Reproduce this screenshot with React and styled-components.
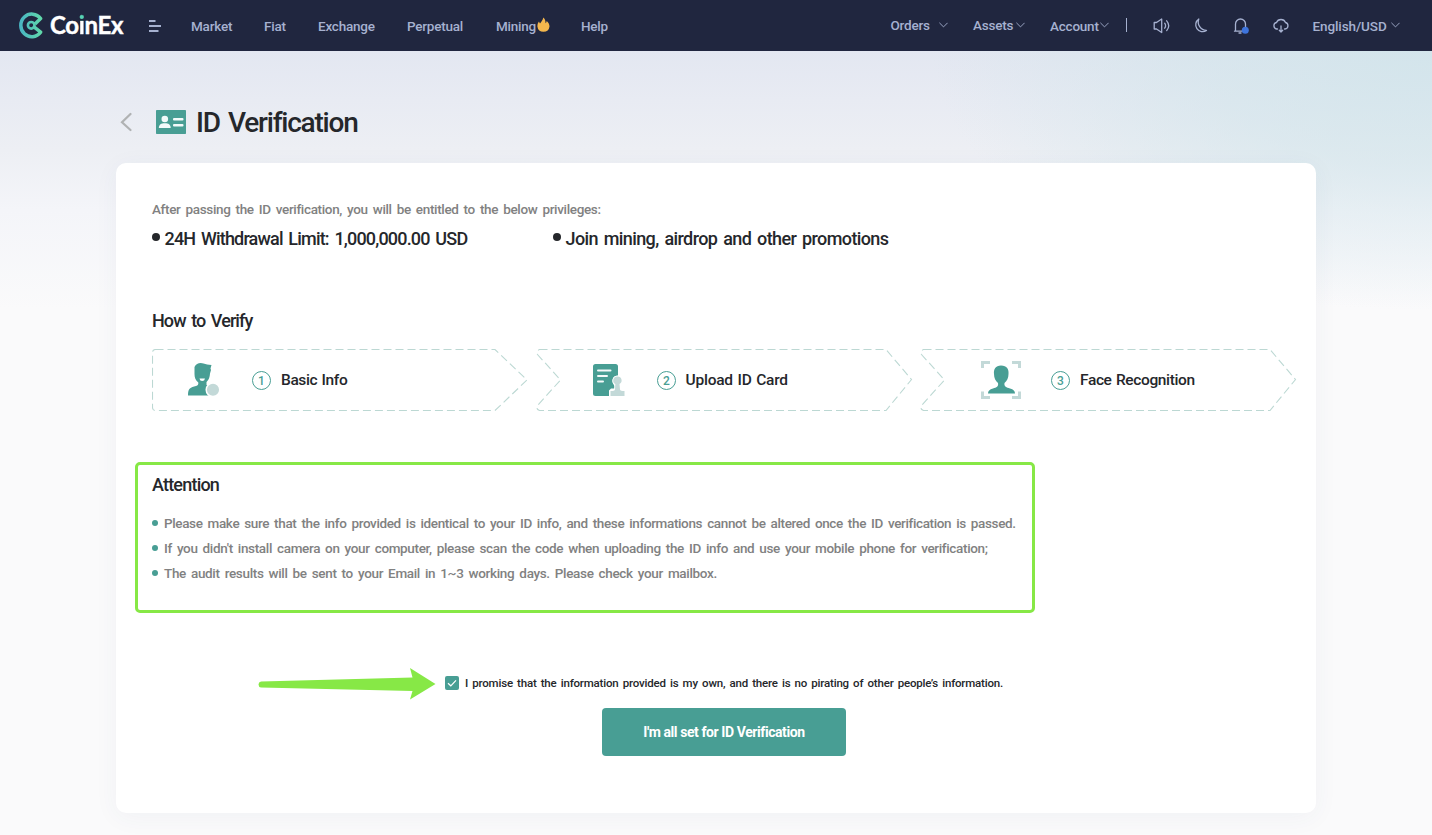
import React from 'react';
import styled, { createGlobalStyle } from 'styled-components';

const GlobalStyle = createGlobalStyle`
  * { box-sizing: border-box; }
  body {
    margin: 0;
    font-family: Roboto, "Liberation Sans", sans-serif;
    font-weight: 500;
    color: #25272b;
    background: #fafafb;
  }
`;

const Page = styled.div`
  height: 835px;
  overflow: hidden;
  background:
    radial-gradient(ellipse 500px 260px at 1432px 51px, rgba(207, 228, 234, 0.8), rgba(207, 228, 234, 0.55) 45%, rgba(207, 228, 234, 0)),
    linear-gradient(180deg, #e3e7f1 51px, #e8ebf3 100px, #edeff4 150px, #f4f5f9 210px, #fafafb 310px);
`;

const Header = styled.header`
  height: 51px;
  display: flex;
  align-items: center;
  background: #20263f;
  color: #a6b1d0;
  font-size: 13.5px;
  padding: 1px 0 0 18px;
`;

const Logo = styled.div`
  width: 131px;
  display: flex;
  align-items: center;
  gap: 6px;
  color: #fff;
  font: 700 24px/30px Lato, sans-serif;
  letter-spacing: -0.3px;
  -webkit-text-stroke: 0.4px #fff;
  svg { display: block; flex: none; margin-top: -2px; }
`;

const LogoName = styled.span`
  margin-top: -2px;
`;

const LogoAccent = styled.span`
  color: transparent;
  -webkit-text-stroke: 0.4px transparent;
  background: linear-gradient(180deg, #56d3b4 11px, #fff 11px);
  -webkit-background-clip: text;
  background-clip: text;
`;

const MenuIcon = styled.svg`
  display: block;
  width: 42px;
  height: 12px;
  flex: none;
`;

const NavItem = styled.a`
  width: ${p => p.$w}px;
  flex: none;
  display: flex;
  align-items: center;
  white-space: nowrap;
  letter-spacing: ${p => p.$ls ?? -0.22}px;
  padding-bottom: ${p => p.$lift ?? 0}px;
  gap: ${p => p.$gap ?? 0}px;
  svg { display: block; flex: none; margin-top: ${p => (p.$lift ? -1 : -3)}px; }
`;

const Tools = styled.div`
  margin-left: auto;
  display: flex;
  align-items: center;
  width: 541.5px;
  flex: none;
`;

const Divider = styled.span`
  width: 1px;
  height: 14px;
  margin: 0 26px 2px 0.5px;
  background: #a6b1d0;
`;

const ToolIcon = styled.svg`
  display: block;
  flex: none;
  width: 18px;
  height: 18px;
  margin: 0 ${p => p.$mr ?? 22}px 1px 0;
  fill: none;
  stroke: #a6b1d0;
  stroke-width: 1.3;
  stroke-linecap: round;
  stroke-linejoin: round;
`;

const Main = styled.main`
  width: 1200px;
  margin: 0 auto;
`;

const TitleRow = styled.div`
  height: 112px;
  padding: 31px 0 0 4px;
  display: flex;
  align-items: center;
`;

const BackIcon = styled.svg`
  display: block;
  width: 12px;
  height: 20px;
  margin: 0 24px 2px 0;
`;

const CardIcon = styled.svg`
  display: block;
  width: 30px;
  height: 24px;
  margin: 0 10px 2px 0;
`;

const Title = styled.h1`
  margin: 0;
  font-size: 28px;
  font-weight: 500;
  line-height: 32px;
  letter-spacing: -1.22px;
  word-spacing: 2.5px;
  white-space: nowrap;
`;

const Card = styled.section`
  height: 650px;
  padding: 36px 19px 0 36px;
  border-radius: 10px;
  background: #fff;
  box-shadow: 0 4px 24px rgba(60, 70, 110, 0.05);
`;

const Intro = styled.p`
  margin: 0;
  font-size: 13.5px;
  line-height: 20px;
  letter-spacing: -0.34px;
  word-spacing: 2px;
  color: #818181;
`;

const Privileges = styled.div`
  display: grid;
  grid-template-columns: 401px auto;
  margin-top: 10px;
`;

const Privilege = styled.div`
  display: flex;
  align-items: center;
  gap: 4.5px;
  font-size: 18px;
  line-height: 20px;
  letter-spacing: ${p => p.$ls}px;
  word-spacing: 2px;
  white-space: nowrap;
  &::before {
    content: "";
    flex: none;
    width: 8px;
    height: 8px;
    border-radius: 50%;
    margin-bottom: 4px;
    background: #25272b;
  }
`;

const Heading = styled.h2`
  margin: ${p => p.$mt ?? 0}px 0 0;
  font-size: 18px;
  font-weight: 500;
  line-height: 20px;
  letter-spacing: ${p => p.$ls}px;
  word-spacing: 2px;
`;

const Steps = styled.div`
  margin-top: 18px;
  display: flex;
  gap: 8px;
`;

const StepBox = styled.div`
  position: relative;
  width: 376px;
  height: 62px;
  flex: none;
  display: flex;
  align-items: center;
  padding-left: ${p => p.$pl}px;
`;

const Outline = styled.svg`
  position: absolute;
  inset: 0;
  width: 377px;
  height: 62px;
  fill: none;
  stroke: #bcd8d3;
  stroke-width: 1.1;
  stroke-dasharray: 8 4;
`;

const StepIcon = styled.svg`
  display: block;
  width: 40px;
  height: 40px;
  margin-right: ${p => p.$mr}px;
`;

const StepNumber = styled.span`
  width: 19px;
  height: 19px;
  margin-right: ${p => p.$mr ?? 10}px;
  border: 1px solid #489e94;
  border-radius: 50%;
  color: #489e94;
  font-size: 12px;
  line-height: 18px;
  text-align: center;
`;

const StepLabel = styled.span`
  font-size: 15.5px;
  line-height: 20px;
  letter-spacing: ${p => p.$ls}px;
  word-spacing: 1px;
  white-space: nowrap;
`;

const Attention = styled.section`
  width: 900px;
  height: 151px;
  margin: 51px 0 0 -17px;
  padding: 10px 14px 24px;
  border: 3px solid #87e846;
  border-radius: 5px;
`;

const Notes = styled.ul`
  list-style: none;
  margin: 16px 0 0;
  padding: 0;
`;

const Note = styled.li`
  display: flex;
  align-items: center;
  gap: 6px;
  font-size: 13.5px;
  line-height: 25px;
  color: #818181;
  letter-spacing: ${p => p.$ls}px;
  word-spacing: 2px;
  white-space: nowrap;
  &::before {
    content: "";
    flex: none;
    width: 6px;
    height: 6px;
    margin-bottom: 1px;
    border-radius: 50%;
    background: #489e94;
  }
`;

const PromiseRow = styled.div`
  display: flex;
  align-items: center;
  height: 32px;
  margin: 55px 0 0 106px;
`;

const Arrow = styled.svg`
  display: block;
  width: 178px;
  height: 32px;
  margin-right: 9px;
`;

const CheckBox = styled.span`
  width: 14px;
  height: 14px;
  margin: 0 6px 2px 0;
  border-radius: 2px;
  background: #489e94;
  svg { display: block; }
`;

const PromiseText = styled.label`
  padding-bottom: 2px;
  font-size: 11.5px;
  letter-spacing: -0.187px;
  word-spacing: 1.5px;
  white-space: nowrap;
`;

const Submit = styled.button`
  display: block;
  width: 244px;
  height: 48px;
  margin: 8px 0 0 450px;
  padding: 0;
  border: 0;
  border-radius: 4px;
  background: #489e94;
  color: #fff;
  font: 700 14px Roboto, sans-serif;
  letter-spacing: -0.42px;
`;

const Chevron = () => (
  <svg width="9" height="6" viewBox="0 0 9 6" fill="none" stroke="#a6b1d0" strokeWidth="0.9">
    <path d="M0.4 0.8 4.5 4.9 8.6 0.8" />
  </svg>
);

const StepOutline = ({ notched }) => (
  <Outline viewBox="0 0 377 62">
    <path d={notched
      ? 'M3.500.5H350L375.500 30.500 350 61.500H3.500Q-.5 60 1.500 56.500L24.500 31 1.500 5.500Q0 2 3.500.5Z'
      : 'M3.500.5H343L375 31 343 61.500H3.500Q.5 61.500.5 58.500V3.500Q.5.5 3.500.5Z'} />
  </Outline>
);

const notes = [
  ['Please make sure that the info provided is identical to your ID info, and these informations cannot be altered once the ID verification is passed.', -0.365],
  ["If you didn't install camera on your computer, please scan the code when uploading the ID info and use your mobile phone for verification;", -0.343],
  ['The audit results will be sent to your Email in 1~3 working days. Please check your mailbox.', -0.335],
];

export default function App() {
  return (
    <Page>
      <GlobalStyle />
      <Header>
        <Logo>
          <svg width="26" height="27" viewBox="0 0 26 27" fill="none" stroke="url(#mark)" strokeLinejoin="round">
            <defs>
              <linearGradient id="mark" gradientUnits="userSpaceOnUse" x1="1" y1="13" x2="25" y2="13">
                <stop offset="0" stopColor="#48b4c4" />
                <stop offset="1" stopColor="#62dba9" />
              </linearGradient>
            </defs>
            <path d="M17 12 22.600 6.600A11 11.300 0 1 0 22.600 20.200L15 14.200" strokeWidth="3.500" />
            <circle cx="13.200" cy="13.300" r="3.300" strokeWidth="2.600" />
          </svg>
          <LogoName>Co<LogoAccent>i</LogoAccent>nEx</LogoName>
        </Logo>
        <MenuIcon viewBox="0 0 42 12" stroke="#a6b1d0" strokeWidth="1.900">
          <path d="M0 1H6.500M0 6H12M0 11H9.500" />
        </MenuIcon>
        <NavItem $w={73}>Market</NavItem>
        <NavItem $w={54}>Fiat</NavItem>
        <NavItem $w={89}>Exchange</NavItem>
        <NavItem $w={89}>Perpetual</NavItem>
        <NavItem $w={85} $gap={1}>
          Mining
          <svg width="13" height="16" viewBox="0 0 13 16" fill="#f4b74d">
            <path d="M6.300.5C8.200 1.800 8.500 4 8.500 6.300 9.300 5.800 9.700 5 9.700 4 11.500 5.500 12.500 7.500 12.500 9.500A6.100 6 0 0 1 .4 9.500C.4 7.300 1 5.800 2 4.600 2.200 5.500 2.500 6 3 6.400 4.300 4.800 5.900 3.200 6.300.5Z" />
          </svg>
        </NavItem>
        <NavItem $w={40}>Help</NavItem>
        <Tools>
          <NavItem $w={82.5} $gap={9} $lift={2}>Orders <Chevron /></NavItem>
          <NavItem $w={77} $gap={3} $lift={2}>Assets <Chevron /></NavItem>
          <NavItem $w={75} $gap={1}>Account <Chevron /></NavItem>
          <Divider />
          <ToolIcon viewBox="0 0 18 18">
            <path d="M1.200 5.500H3.500L8.700 2V15.500L3.500 12H1.200ZM11.700 6.200Q13.500 8.700 11.700 11.200M13.700 3.800Q17.800 8.700 13.700 13.600" />
          </ToolIcon>
          <ToolIcon viewBox="0 0 18 18" $mr={21}>
            <path d="M5.800 2A6.900 6.900 0 1 0 13.500 13.500 8.500 8.500 0 0 1 5.800 2Z" />
          </ToolIcon>
          <ToolIcon viewBox="0 0 18 18">
            <path d="M2.500 14.200H14M3.500 14V7A5 5 0 0 1 13.500 7V13M7 16H9" />
            <circle cx="13.300" cy="13.300" r="3.500" fill="#3e74dc" stroke="none" />
          </ToolIcon>
          <ToolIcon viewBox="0 0 18 18" $mr={23}>
            <path d="M5.500 12H4.600A3.200 3.300 0 0 1 4.500 5.500 4.800 4.600 0 0 1 13.500 5.500 3.200 3.300 0 0 1 13 12H12.500M9 9V15M7.300 13.300 9 15.100 10.700 13.300" />
          </ToolIcon>
          <NavItem $w={100} $gap={4} $ls={-0.1}>English/USD <Chevron /></NavItem>
        </Tools>
      </Header>
      <Main>
        <TitleRow>
          <BackIcon viewBox="0 0 12 20" fill="none" stroke="#b0b2b3" strokeWidth="2.200" strokeLinecap="round">
            <path d="M10.500 2 2 10.300 10.500 18" />
          </BackIcon>
          <CardIcon viewBox="0 0 30 24" fill="#f3fafa">
            <rect width="30" height="24" rx=".7" fill="#489e94" />
            <circle cx="8.800" cy="9" r="3.300" />
            <path d="M2.800 18C3 14.500 5 13.200 8.800 13.200S14.500 14.500 14.700 18Z" />
            <rect x="17" y="8" width="10.500" height="2.600" rx="1" />
            <rect x="17" y="14" width="10.500" height="2.600" rx="1" />
          </CardIcon>
          <Title>ID Verification</Title>
        </TitleRow>
        <Card>
          <Intro>After passing the ID verification, you will be entitled to the below privileges:</Intro>
          <Privileges>
            <Privilege $ls={-0.82}>24H Withdrawal Limit: 1,000,000.00 USD</Privilege>
            <Privilege $ls={-0.61}>Join mining, airdrop and other promotions</Privilege>
          </Privileges>
          <Heading $mt={62} $ls={-0.92}>How to Verify</Heading>
          <Steps>
            <StepBox $pl={34}>
              <StepOutline />
              <StepIcon $mr={26} viewBox="0 0 40 40" fill="#489e94">
                <path d="M8.500 7C10 3.500 14 2.300 17.500 3.600 20 4.500 22 5 25.500 5L24.500 8.500 25 10 24 13.500C23.500 19 22 20.500 20.500 22V25C24.500 26.500 28 27 28.500 29V35.500H2C2 28 4.500 27.500 10 26 12 25.500 12.500 24.500 12.300 22.500 9.500 20.500 8.500 17.500 8.500 14Z" />
                <path d="M13.500 18.500H19Q18.500 21 16.200 21T13.500 18.500Z" fill="#fff" />
                <circle cx="27" cy="29.800" r="6.800" fill="#c3d9d8" stroke="#fff" strokeWidth="1.500" />
              </StepIcon>
              <StepNumber>1</StepNumber>
              <StepLabel $ls={-0.4}>Basic Info</StepLabel>
            </StepBox>
            <StepBox $pl={55}>
              <StepOutline notched />
              <StepIcon $mr={26} viewBox="0 0 40 40">
                <path d="M4.500 4H24.500Q27 4 27 6.500V15.500C22 15.500 20.500 20 22 23.500L23.500 26V28.500H20L18 30.500V36H4.500Q2 36 2 33.500V6.500Q2 4 4.500 4Z" fill="#489e94" />
                <path d="M7 10.500H19.500M7 16H16M7 21.500H12" stroke="#f4fafa" strokeWidth="2" strokeLinecap="round" />
                <path d="M26.300 16.500A4 4 0 0 1 28.500 24L29 29.500Q29.200 31 33.500 31V36H19.500V31Q23.800 31 24 29.500L24.300 24A4 4 0 0 1 26.300 16.500Z" fill="#c3d9d8" stroke="#fff" strokeWidth="1.500" paintOrder="stroke" />
              </StepIcon>
              <StepNumber $mr={9.5}>2</StepNumber>
              <StepLabel $ls={-0.22}>Upload ID Card</StepLabel>
            </StepBox>
            <StepBox $pl={61}>
              <StepOutline notched />
              <StepIcon $mr={30} viewBox="0 0 40 40">
                <path d="M1.500 8V2.500H9M31 2.500H38.500V8M1.500 31.500V37.500H9M31 37.500H38.500V31.500" fill="none" stroke="#c3d9d8" strokeWidth="3" />
                <path d="M20 5.500C26 5.500 28 9.500 27.500 14 27.500 18 26 21 23.500 23 22.800 26.500 25.500 27.500 29 28.500 32.500 29.500 34 31 34 33.500H7C7 31 8.500 29.500 12 28.500 15.500 27.500 17.700 26.500 17 23 14.500 21 13 18 13 14 12.500 9.500 14.500 5.500 20 5.500Z" fill="#489e94" />
              </StepIcon>
              <StepNumber>3</StepNumber>
              <StepLabel $ls={-0.38}>Face Recognition</StepLabel>
            </StepBox>
          </Steps>
          <Attention>
            <Heading $ls={-0.8}>Attention</Heading>
            <Notes>
              {notes.map(([text, ls]) => <Note key={text} $ls={ls}>{text}</Note>)}
            </Notes>
          </Attention>
          <PromiseRow>
            <Arrow viewBox="0 0 178 32" fill="#87e846">
              <path d="M3 13.500 154.500 9.500 152 0 177.500 16 152 31.500 154.500 23 3 19.500Q.5 19 .5 16.500T3 13.500Z" />
            </Arrow>
            <CheckBox>
              <svg width="14" height="14" viewBox="0 0 14 14" fill="none" stroke="#fff" strokeWidth="1.200">
                <path d="M3 7.200 5.800 9.800 11 4.300" />
              </svg>
            </CheckBox>
            <PromiseText>I promise that the information provided is my own, and there is no pirating of other people’s information.</PromiseText>
          </PromiseRow>
          <Submit>I'm all set for ID Verification</Submit>
        </Card>
      </Main>
    </Page>
  );
}
